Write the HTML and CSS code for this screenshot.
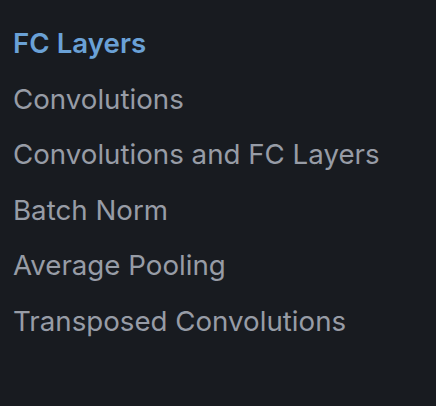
FILE: index.html
```html
<!DOCTYPE html>
<html>
<head>
<meta charset="utf-8">
<link rel="stylesheet" href="styles.css">
</head>
<body>
<nav class="toc">
  <a class="item active" href="#">FC Layers</a>
  <a class="item" href="#">Convolutions</a>
  <a class="item" href="#">Convolutions and FC Layers</a>
  <a class="item" href="#">Batch Norm</a>
  <a class="item" href="#">Average Pooling</a>
  <a class="item" href="#">Transposed Convolutions</a>
</nav>
</body>
</html>
```
FILE: styles.css
```css
html, body {
  margin: 0;
  padding: 0;
  background: #181b20;
  height: 100%;
}
.toc {
  display: flex;
  flex-direction: column;
  padding: 16px 0 0 13px;
  font-family: Inter, "Noto Sans", sans-serif;
  font-size: 27.7px;
}
.item {
  display: block;
  line-height: 55.6px;
  color: #979ca6;
  text-decoration: none;
}
.item.active {
  color: #6aa1d6;
  font-weight: 600;
}
```
